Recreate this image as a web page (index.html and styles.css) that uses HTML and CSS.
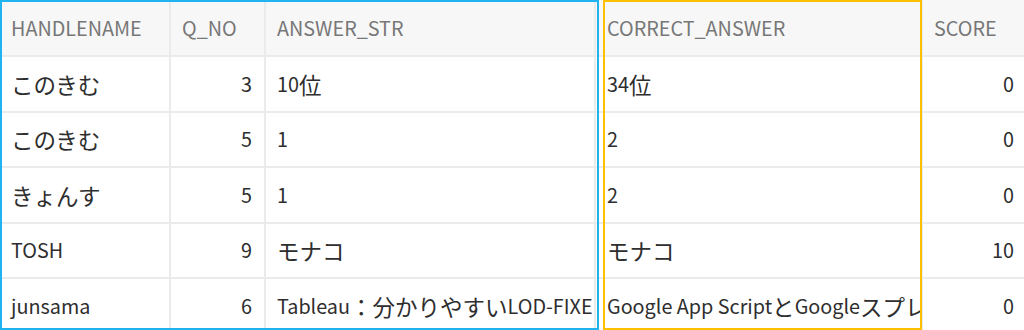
FILE: index.html
```html
<!DOCTYPE html>
<html lang="ja">
<head>
<meta charset="utf-8">
<title>Answers</title>
<link rel="stylesheet" href="styles.css">
</head>
<body>
<div class="sheet">
  <div class="grid">
    <div class="cell head">HANDLENAME</div>
    <div class="cell head">Q_NO</div>
    <div class="cell head">ANSWER_STR</div>
    <div class="cell head">CORRECT_ANSWER</div>
    <div class="cell head">SCORE</div>

    <div class="cell"><span class="ja">このきむ</span></div>
    <div class="cell num">3</div>
    <div class="cell">10<span class="ja">位</span></div>
    <div class="cell">34<span class="ja">位</span></div>
    <div class="cell num">0</div>

    <div class="cell"><span class="ja">このきむ</span></div>
    <div class="cell num">5</div>
    <div class="cell">1</div>
    <div class="cell">2</div>
    <div class="cell num">0</div>

    <div class="cell"><span class="ja">きょんす</span></div>
    <div class="cell num">5</div>
    <div class="cell">1</div>
    <div class="cell">2</div>
    <div class="cell num">0</div>

    <div class="cell">TOSH</div>
    <div class="cell num">9</div>
    <div class="cell"><span class="ja">モナコ</span></div>
    <div class="cell"><span class="ja">モナコ</span></div>
    <div class="cell num">10</div>

    <div class="cell">junsama</div>
    <div class="cell num">6</div>
    <div class="cell">Tableau<span class="ja">：分かりやすい</span>LOD-FIXE</div>
    <div class="cell">Google App Script<span class="ja">と</span>Google<span class="ja">スプレッドシート</span></div>
    <div class="cell num">0</div>
  </div>
  <div class="frame frame-blue"></div>
  <div class="frame frame-yellow"></div>
</div>
</body>
</html>
```
FILE: styles.css
```css
html, body {
  margin: 0;
  padding: 0;
  background: #ffffff;
}

.sheet {
  position: relative;
  width: 1024px;
  height: 330px;
  overflow: hidden;
  font-family: "Noto Sans CJK JP", "Noto Sans", sans-serif;
  font-size: 19.8px;
  color: #2e2e2e;
}

.grid {
  display: grid;
  grid-template-columns: 171px 95px 330px 327px 105px;
  grid-template-rows: 57px repeat(5, 55.5px);
}

.cell {
  display: flex;
  align-items: center;
  box-sizing: border-box;
  padding: 0 12px 0 11px;
  border-right: 2px solid #ebebeb;
  border-bottom: 2px solid #ebebeb;
  white-space: nowrap;
  overflow: hidden;
  line-height: 1;
}

.head {
  background: #f7f7f7;
  color: #777777;
}

.num {
  justify-content: flex-end;
}

.ja {
  font-size: 22.5px;
}

.frame {
  position: absolute;
  top: 0;
  height: 330px;
  box-sizing: border-box;
  border: 2px solid;
  pointer-events: none;
}

.frame-blue {
  left: 0;
  width: 599px;
  border-color: #1fb4f0;
}

.frame-yellow {
  left: 603px;
  width: 319px;
  border-color: #ffc000;
}
```
